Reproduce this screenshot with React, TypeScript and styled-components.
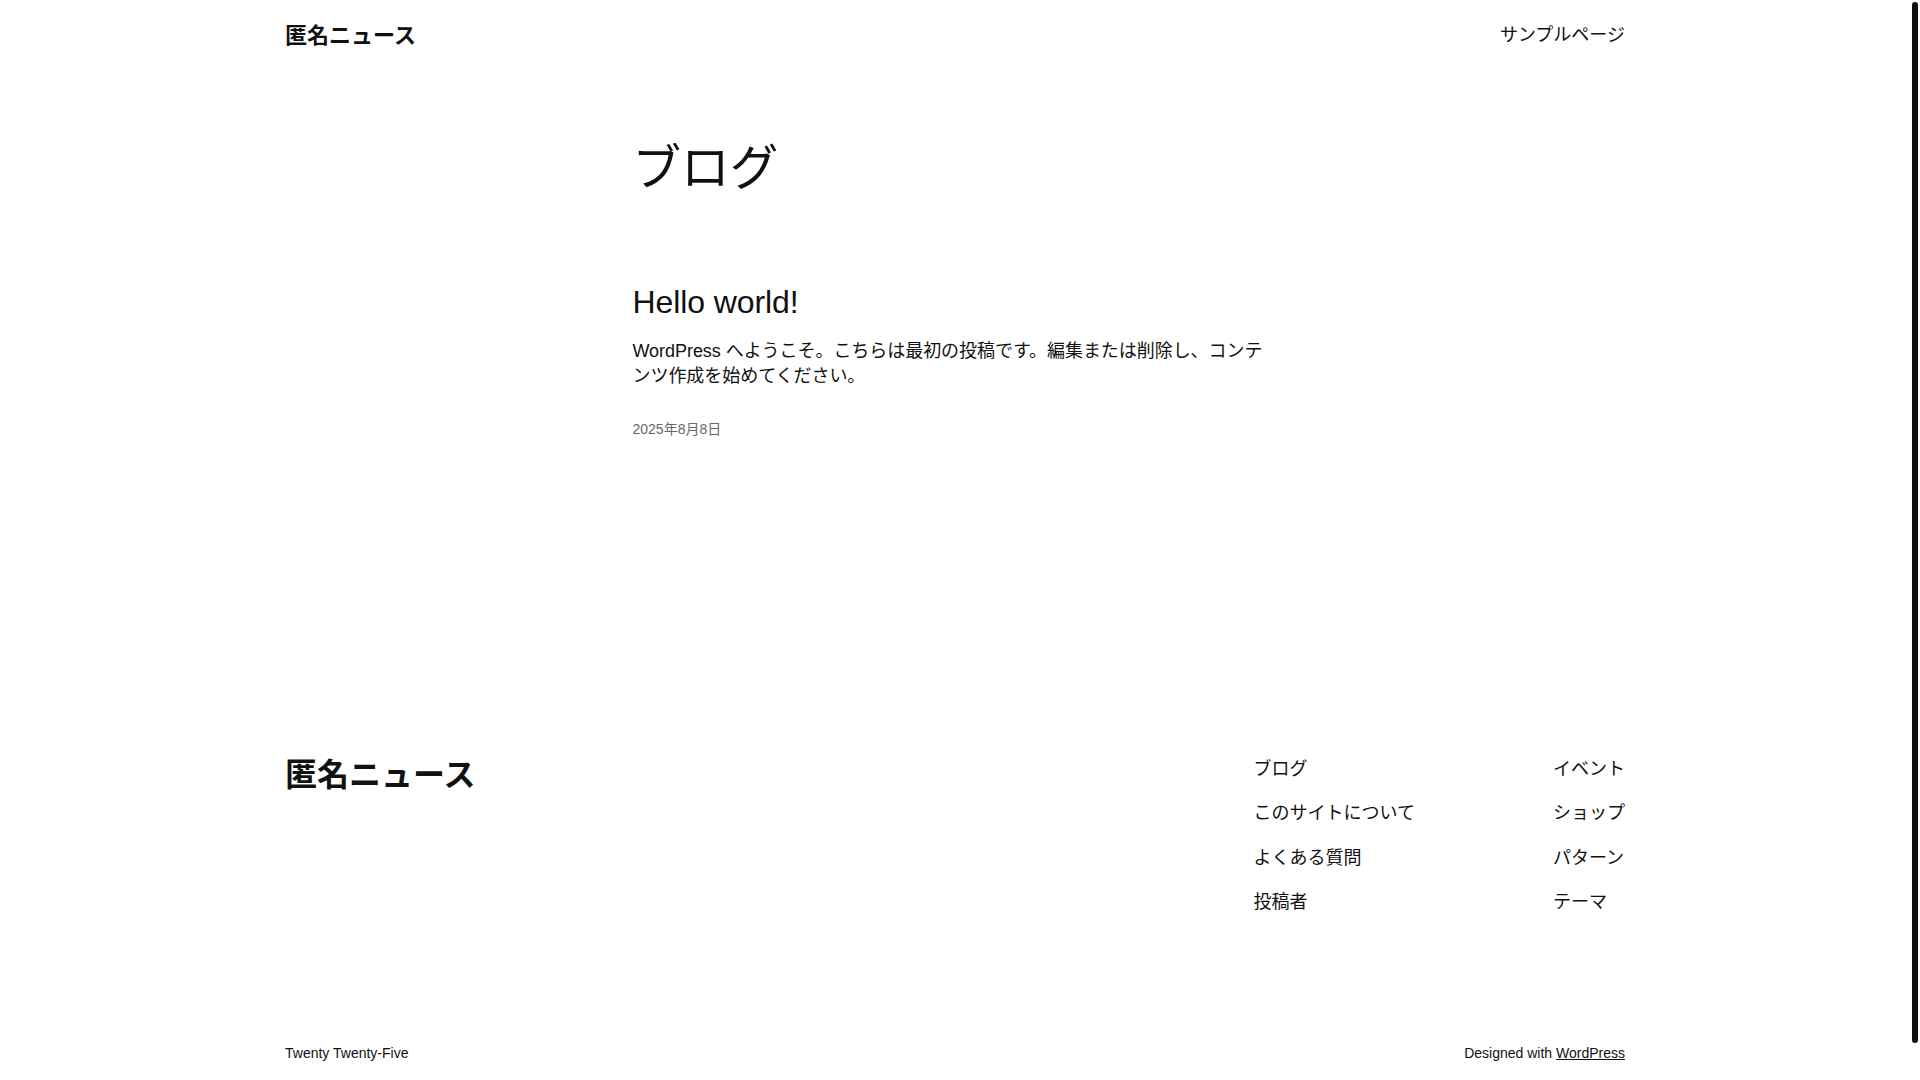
import React from "react";
import styled, { createGlobalStyle } from "styled-components";

const GlobalStyle = createGlobalStyle`
  html, body {
    margin: 0;
    padding: 0;
    background: #ffffff;
  }
  body {
    font-family: "Liberation Sans", "Noto Sans CJK JP", sans-serif;
    color: #111111;
    line-height: 1.4;
  }
  a {
    color: inherit;
  }
`;

const Page = styled.div`
  padding: 0 60px 54px 50px;
`;

const ScrollThumb = styled.div`
  position: fixed;
  top: 2px;
  right: 2px;
  width: 6px;
  height: 1041px;
  border-radius: 3px;
  background: #111111;
`;

const Wide = styled.div`
  max-width: 1340px;
  margin: 0 auto;
`;

const Header = styled(Wide)`
  display: flex;
  justify-content: space-between;
  align-items: center;
  padding: 21px 0 17px;
`;

const HeaderNav = styled.nav`
  display: flex;
  padding-bottom: 2px;
`;

const SiteTitle = styled.a<{ $size: number }>`
  font-size: ${(p) => p.$size}px;
  font-weight: 700;
  line-height: ${(p) => (p.$size > 24 ? 1.25 : 1.4)};
  text-decoration: none;
  color: #111111;
`;

const NavLink = styled.a`
  font-size: 18px;
  line-height: 1.4;
  text-decoration: none;
  color: #111111;
`;

const Content = styled.main`
  max-width: 645px;
  margin: 0 auto;
  padding-top: 70.5px;
`;

const PageTitle = styled.h1`
  font-size: 48.6px;
  font-weight: 400;
  line-height: 1.2;
  margin: 0;
`;

const Post = styled.article`
  margin-top: 85px;
  display: flex;
  flex-direction: column;
`;

const PostTitle = styled.h2`
  font-size: 32px;
  font-weight: 400;
  line-height: 1.2;
  letter-spacing: -0.1px;
  margin: 0;
`;

const Excerpt = styled.p`
  font-size: 18px;
  line-height: 1.4;
  letter-spacing: -0.05px;
  margin: 17.6px 0 0;
`;

const PostDate = styled.time`
  font-size: 14px;
  line-height: 1.4;
  color: #686868;
  margin-top: 30.6px;
`;

const Footer = styled(Wide)`
  padding-top: 315.7px;
`;

const FooterTop = styled.div`
  display: flex;
  justify-content: space-between;
  align-items: flex-start;
`;

const FooterNav = styled.nav`
  display: flex;
  gap: 138px;
  padding-top: 2px;
`;

const NavColumn = styled.div`
  display: flex;
  flex-direction: column;
  gap: 19.3px;
`;

const FooterBottom = styled.div`
  display: flex;
  justify-content: space-between;
  align-items: center;
  margin-top: 128.6px;
  font-size: 14px;
  line-height: 1.4;
`;

const SmallText = styled.span`
  font-size: 14px;
`;

const UnderlineLink = styled.a`
  text-decoration: underline;
  color: #111111;
`;

const leftNav = ["ブログ", "このサイトについて", "よくある質問", "投稿者"];
const rightNav = ["イベント", "ショップ", "パターン", "テーマ"];

export default function App() {
  return (
    <>
      <GlobalStyle />
      <Page>
        <Header as="header">
          <SiteTitle $size={22} href="#">匿名ニュース</SiteTitle>
          <HeaderNav>
            <NavLink href="#">サンプルページ</NavLink>
          </HeaderNav>
        </Header>
        <Content>
          <PageTitle>ブログ</PageTitle>
          <Post>
            <PostTitle>Hello world!</PostTitle>
            <Excerpt>
              WordPress へようこそ。こちらは最初の投稿です。編集または削除し、コンテンツ作成を始めてください。
            </Excerpt>
            <PostDate>2025年8月8日</PostDate>
          </Post>
        </Content>
        <Footer as="footer">
          <FooterTop>
            <SiteTitle $size={32} href="#">匿名ニュース</SiteTitle>
            <FooterNav>
              <NavColumn>
                {leftNav.map((t) => (
                  <NavLink key={t} href="#">{t}</NavLink>
                ))}
              </NavColumn>
              <NavColumn>
                {rightNav.map((t) => (
                  <NavLink key={t} href="#">{t}</NavLink>
                ))}
              </NavColumn>
            </FooterNav>
          </FooterTop>
          <FooterBottom>
            <SmallText>Twenty Twenty-Five</SmallText>
            <SmallText>
              Designed with <UnderlineLink href="#">WordPress</UnderlineLink>
            </SmallText>
          </FooterBottom>
        </Footer>
      </Page>
      <ScrollThumb />
    </>
  );
}
